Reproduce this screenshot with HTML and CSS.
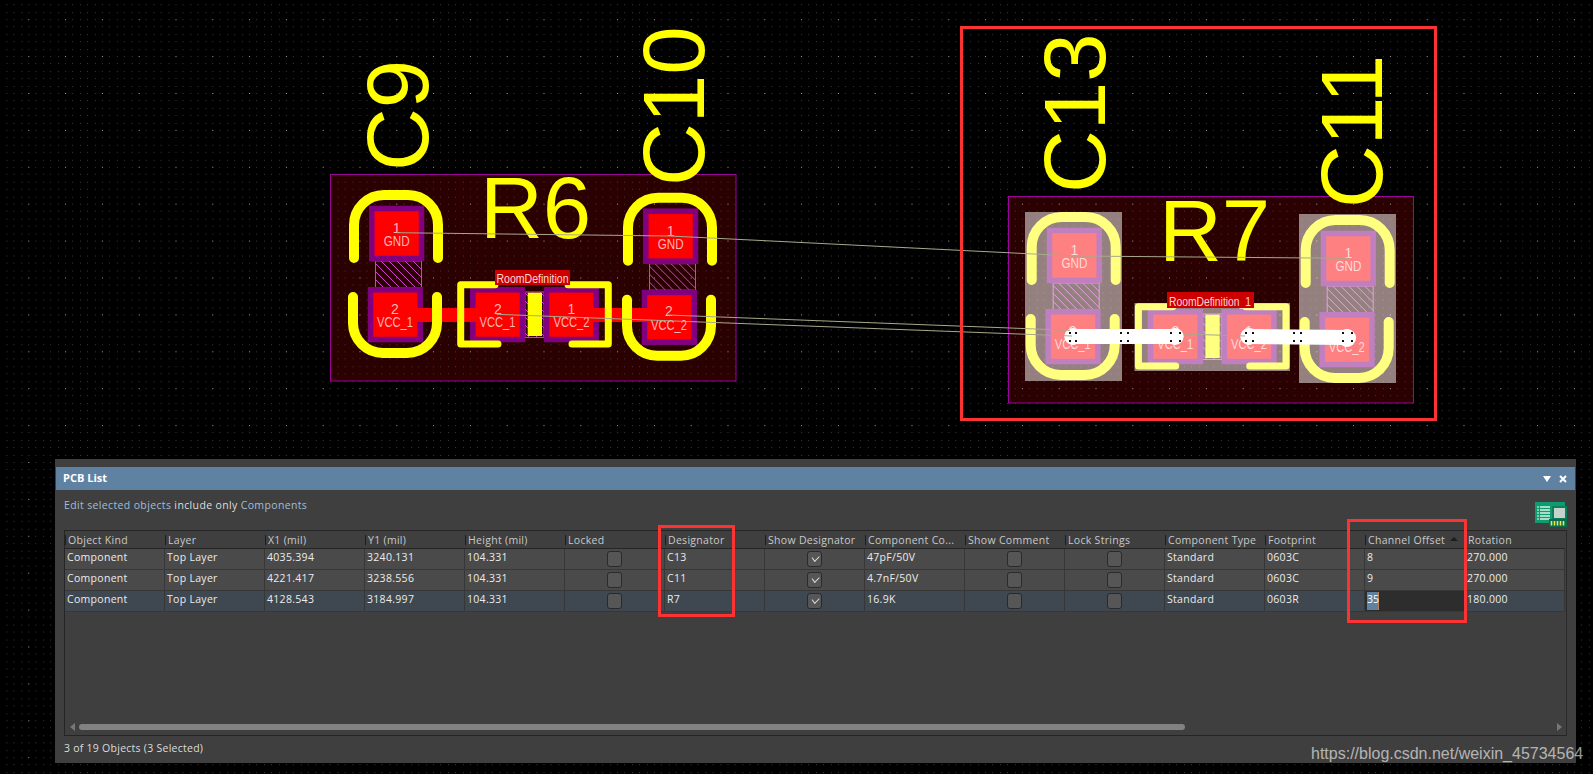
FILE: index.html
```html
<!DOCTYPE html>
<html lang="en">
<head>
<meta charset="utf-8">
<title>PCB List</title>
<link rel="stylesheet" href="styles.css">
</head>
<body>
<div class="stage">
  <svg class="canvas" width="1593" height="774" viewBox="0 0 1593 774">
    <defs>
      <pattern id="grid" width="36.8" height="36.9" patternUnits="userSpaceOnUse" patternTransform="translate(28.3 19.2)">
        <g class="dot-minor">
          <rect x="7.36" y="0" width="1" height="1"/><rect x="14.72" y="0" width="1" height="1"/><rect x="22.08" y="0" width="1" height="1"/><rect x="29.44" y="0" width="1" height="1"/>
          <rect x="0" y="7.38" width="1" height="1"/><rect x="7.36" y="7.38" width="1" height="1"/><rect x="14.72" y="7.38" width="1" height="1"/><rect x="22.08" y="7.38" width="1" height="1"/><rect x="29.44" y="7.38" width="1" height="1"/>
          <rect x="0" y="14.76" width="1" height="1"/><rect x="7.36" y="14.76" width="1" height="1"/><rect x="14.72" y="14.76" width="1" height="1"/><rect x="22.08" y="14.76" width="1" height="1"/><rect x="29.44" y="14.76" width="1" height="1"/>
          <rect x="0" y="22.14" width="1" height="1"/><rect x="7.36" y="22.14" width="1" height="1"/><rect x="14.72" y="22.14" width="1" height="1"/><rect x="22.08" y="22.14" width="1" height="1"/><rect x="29.44" y="22.14" width="1" height="1"/>
          <rect x="0" y="29.52" width="1" height="1"/><rect x="7.36" y="29.52" width="1" height="1"/><rect x="14.72" y="29.52" width="1" height="1"/><rect x="22.08" y="29.52" width="1" height="1"/><rect x="29.44" y="29.52" width="1" height="1"/>
        </g>
        <rect class="dot-major" x="0" y="0" width="1" height="1"/>
      </pattern>
      <pattern id="hatch" width="8" height="8" patternUnits="userSpaceOnUse">
        <path class="hatch-line" d="M-2 -2L10 10M-10 -2L2 10M6 -2L18 10"/>
      </pattern>
      <g id="cap-pads">
        <rect class="hatch" x="375.5" y="261" width="46" height="26.5"/>
        <rect class="pad" x="371.8" y="208.5" width="49.7" height="50"/>
        <rect class="pad" x="370.5" y="289.8" width="49.7" height="49.7"/>
      </g>
      <g id="cap-silk">
        <path class="silk" d="M354 258V225A30 30 0 0 1 384 195H408A30 30 0 0 1 438 225V258"/>
        <path class="silk" d="M353 297V323A30 30 0 0 0 383 353H407A30 30 0 0 0 437 323V297"/>
      </g>
      <g id="res-pads">
        <rect class="hatch" x="525" y="292" width="19" height="45.5"/>
        <rect class="pad" x="472.8" y="289.8" width="49.7" height="49.7"/>
        <rect class="pad" x="546.5" y="289.8" width="49.7" height="49.7"/>
      </g>
      <g id="res-silk">
        <rect class="bar" x="527.7" y="292.7" width="14.3" height="43.3"/>
        <path class="silk-square" d="M498 344H460.7V284.7H495"/>
        <path class="silk-square" d="M572 344H608.3V284.7H568"/>
      </g>
    </defs>

    <rect class="room" x="330.5" y="174.5" width="405.5" height="206.5"/>
    <rect class="room" x="1008.5" y="196.5" width="405" height="206.5"/>
    <rect fill="url(#grid)" width="1593" height="774"/>

    <!-- left channel -->
    <use href="#cap-pads"/>
    <use href="#cap-pads" transform="translate(274 2.7)"/>
    <use href="#res-pads"/>
    <path class="track" d="M417 315H476M593 315H650"/>
    <use href="#cap-silk"/>
    <use href="#cap-silk" transform="translate(274 2.7)"/>
    <use href="#res-silk"/>
    <text class="pin" x="396.7" y="233">1</text>
    <text class="pin" x="396.7" y="246" textLength="26" lengthAdjust="spacingAndGlyphs">GND</text>
    <text class="pin" x="395" y="313.500">2</text>
    <text class="pin" x="395" y="327" textLength="36" lengthAdjust="spacingAndGlyphs">VCC_1</text>
    <text class="pin" x="670.7" y="235.700">1</text>
    <text class="pin" x="670.7" y="248.7" textLength="26" lengthAdjust="spacingAndGlyphs">GND</text>
    <text class="pin" x="669" y="316.2">2</text>
    <text class="pin" x="669" y="329.7" textLength="36" lengthAdjust="spacingAndGlyphs">VCC_2</text>
    <text class="pin" x="498" y="313.500">2</text>
    <text class="pin" x="497.5" y="327" textLength="36" lengthAdjust="spacingAndGlyphs">VCC_1</text>
    <text class="pin" x="571.5" y="313.500">1</text>
    <text class="pin" x="571.5" y="327" textLength="36" lengthAdjust="spacingAndGlyphs">VCC_2</text>
    <rect class="room-tag" x="495" y="270" width="75" height="15"/>
    <text class="room-name" x="532.5" y="283" textLength="72" lengthAdjust="spacingAndGlyphs">RoomDefinition</text>

    <!-- right channel, selected -->
    <g transform="translate(677.7 22)"><use href="#cap-pads"/><use href="#cap-silk"/></g>
    <g transform="translate(951.7 25)"><use href="#cap-pads"/><use href="#cap-silk"/></g>
    <g transform="translate(677.7 22)"><use href="#res-pads"/><use href="#res-silk"/></g>
    <text class="pin" x="1074.4" y="255">1</text>
    <text class="pin" x="1074.4" y="268" textLength="26" lengthAdjust="spacingAndGlyphs">GND</text>
    <text class="pin" x="1072.7" y="335.500">2</text>
    <text class="pin" x="1072.7" y="349" textLength="36" lengthAdjust="spacingAndGlyphs">VCC_1</text>
    <text class="pin" x="1348.4" y="258">1</text>
    <text class="pin" x="1348.4" y="271" textLength="26" lengthAdjust="spacingAndGlyphs">GND</text>
    <text class="pin" x="1346.7" y="338.500">2</text>
    <text class="pin" x="1346.7" y="352" textLength="36" lengthAdjust="spacingAndGlyphs">VCC_2</text>
    <text class="pin" x="1175.5" y="335.500">2</text>
    <text class="pin" x="1175.2" y="349" textLength="36" lengthAdjust="spacingAndGlyphs">VCC_1</text>
    <text class="pin" x="1249" y="335.500">1</text>
    <text class="pin" x="1249" y="349" textLength="36" lengthAdjust="spacingAndGlyphs">VCC_2</text>
    <rect class="veil" x="1025" y="212" width="97" height="169"/>
    <rect class="veil" x="1299" y="214" width="97" height="169"/>
    <rect class="veil" x="1134.5" y="303" width="155.5" height="68"/>
    <path class="track-selected" d="M1072 336.500H1176M1248 336.500L1348 337.500"/>
    <circle class="via-end" cx="1347" cy="338" r="9"/>
    <circle class="via-end" cx="1073" cy="336.500" r="8.500"/>
    <circle class="via-end" cx="1175" cy="336.500" r="8.500"/>
    <circle class="via-end" cx="1249" cy="336.500" r="8.500"/>
    <g class="via-dots">
      <rect x="1069" y="332" width="2" height="2"/><rect x="1075" y="332" width="2" height="2"/><rect x="1069" y="340" width="2" height="2"/><rect x="1075" y="340" width="2" height="2"/>
      <rect x="1120" y="332" width="2" height="2"/><rect x="1127" y="332" width="2" height="2"/><rect x="1120" y="340" width="2" height="2"/><rect x="1127" y="340" width="2" height="2"/>
      <rect x="1170" y="332" width="2" height="2"/><rect x="1179" y="332" width="2" height="2"/><rect x="1170" y="340" width="2" height="2"/><rect x="1179" y="340" width="2" height="2"/>
      <rect x="1245" y="332" width="2" height="2"/><rect x="1252" y="332" width="2" height="2"/><rect x="1245" y="340" width="2" height="2"/><rect x="1252" y="340" width="2" height="2"/>
      <rect x="1293" y="332" width="2" height="2"/><rect x="1300" y="332" width="2" height="2"/><rect x="1293" y="340" width="2" height="2"/><rect x="1300" y="340" width="2" height="2"/>
      <rect x="1342" y="332" width="2" height="2"/><rect x="1351" y="332" width="2" height="2"/><rect x="1342" y="340" width="2" height="2"/><rect x="1351" y="340" width="2" height="2"/>
    </g>
    <rect class="room-tag" x="1167" y="292" width="87" height="16"/>
    <text class="room-name" x="1210" y="306" textLength="82" lengthAdjust="spacingAndGlyphs">RoomDefinition_1</text>

    <!-- designators -->
    <text class="designator" x="480" y="238">R6</text>
    <text class="designator" x="1159" y="260.7">R7</text>
    <text class="designator" transform="translate(428 171) rotate(-90)">C9</text>
    <text class="designator" transform="translate(704 186) rotate(-90)">C10</text>
    <text class="designator" transform="translate(1104.500 193) rotate(-90)">C13</text>
    <text class="designator" transform="translate(1381.500 208) rotate(-90)">C11</text>

    <!-- connection lines -->
    <path class="ratsnest" d="M396.7 232.7L670 236L1074 256L1348.7 258.3"/>
    <path class="ratsnest" d="M668 315L1070 330.3"/>
    <path class="ratsnest" d="M496.7 314.3L1072 336"/>
    <path class="ratsnest" d="M1184 334L1245 336"/>

    <rect class="note-box" x="961.5" y="27.5" width="474" height="392"/>
  </svg>

  <section class="panel">
    <header class="titlebar">
      <span class="title">PCB List</span>
      <span class="title-tools">
        <svg class="tool" width="8" height="6" viewBox="0 0 8 6"><path class="tool-fill" d="M0 0H8L4 6Z"/></svg>
        <svg class="tool" width="8" height="8" viewBox="0 0 8 8"><path class="tool-stroke" d="M1 1L7 7M7 1L1 7"/></svg>
      </span>
    </header>
    <div class="filterbar">
      <p class="filter"><span class="link">Edit selected objects</span> include only <span class="link">Components</span></p>
      <svg class="pcb-icon" width="32" height="25" viewBox="0 0 32 25">
        <rect class="ic-board" x="0" y="0" width="30" height="21"/>
        <path class="ic-lines" d="M5 5H15M5 8H15M5 11H15M5 14H15M5 17H15"/>
        <path class="ic-bullets" d="M2 5H4M2 8H4M2 11H4M2 14H4M2 17H4"/>
        <rect class="ic-frame" x="17" y="4" width="15" height="14"/>
        <rect class="ic-chip" x="19" y="6" width="11" height="10"/>
        <rect class="ic-foot" x="14" y="17" width="18" height="8"/>
        <path class="ic-pins" d="M16.5 19V23.500M19.500 19V23.500M22.500 19V23.500M25.500 19V23.500M28.500 19V23.500"/>
      </svg>
    </div>
    <div class="gridbox">
      <table class="list">
        <thead>
          <tr>
            <th>Object Kind</th><th>Layer</th><th>X1 (mil)</th><th>Y1 (mil)</th><th>Height (mil)</th><th>Locked</th><th>Designator</th><th>Show Designator</th><th>Component Co...</th><th>Show Comment</th><th>Lock Strings</th><th>Component Type</th><th>Footprint</th><th class="sorted">Channel Offset</th><th>Rotation</th>
          </tr>
        </thead>
        <tbody>
          <tr>
            <td>Component</td><td>Top Layer</td><td>4035.394</td><td>3240.131</td><td>104.331</td><td class="c"><span class="check"></span></td><td>C13</td><td class="c"><span class="check on"></span></td><td>47pF/50V</td><td class="c"><span class="check"></span></td><td class="c"><span class="check"></span></td><td>Standard</td><td>0603C</td><td>8</td><td>270.000</td>
          </tr>
          <tr>
            <td>Component</td><td>Top Layer</td><td>4221.417</td><td>3238.556</td><td>104.331</td><td class="c"><span class="check"></span></td><td>C11</td><td class="c"><span class="check on"></span></td><td>4.7nF/50V</td><td class="c"><span class="check"></span></td><td class="c"><span class="check"></span></td><td>Standard</td><td>0603C</td><td>9</td><td>270.000</td>
          </tr>
          <tr class="current">
            <td>Component</td><td>Top Layer</td><td>4128.543</td><td>3184.997</td><td>104.331</td><td class="c"><span class="check"></span></td><td>R7</td><td class="c"><span class="check on"></span></td><td>16.9K</td><td class="c"><span class="check"></span></td><td class="c"><span class="check"></span></td><td>Standard</td><td>0603R</td><td class="editing"><span class="sel">35</span></td><td>180.000</td>
          </tr>
        </tbody>
      </table>
      <div class="scrollbar">
        <span class="arrow left"></span>
        <span class="thumb"></span>
        <span class="arrow right"></span>
      </div>
    </div>
    <footer class="status">3 of 19 Objects (3 Selected)</footer>
    <div class="mark mark-designator"></div>
    <div class="mark mark-channel"></div>
  </section>
  <div class="watermark">https://blog.csdn.net/weixin_45734564</div>
</div>
</body>
</html>
```
FILE: styles.css
```css
* { box-sizing: border-box; }
html, body { margin: 0; padding: 0; background: #000; }
body { width: 1593px; height: 774px; overflow: hidden; }
.stage { position: relative; width: 1593px; height: 774px; overflow: hidden; background: #000; }
.canvas { position: absolute; left: 0; top: 0; display: block; }

.dot-minor rect { fill: #3a3a3a; shape-rendering: crispEdges; }
.dot-major { fill: #a8a8a8; shape-rendering: crispEdges; }
.room { fill: #2b0000; stroke: #a000a0; stroke-width: 1; }
.hatch { fill: url(#hatch); stroke: #d23cd2; stroke-width: 1; }
.hatch-line { stroke: #d23cd2; stroke-width: 1; fill: none; }
.pad { fill: #ff0000; stroke: #800080; stroke-width: 5.5; }
.bar { fill: #ffff00; }
.silk { fill: none; stroke: #ffff00; stroke-width: 10; stroke-linecap: round; }
.silk-square { fill: none; stroke: #ffff00; stroke-width: 7; stroke-linecap: round; stroke-linejoin: round; }
.track { fill: none; stroke: #ff0000; stroke-width: 14; }
.track-selected { fill: none; stroke: #fff; stroke-width: 15; stroke-linecap: round; }
.via-end { fill: #fff; }
.via-dots rect { fill: #111; }
.veil { fill: rgba(255, 255, 255, .5); }
.pin { font: 14px "Liberation Sans", Arial, sans-serif; fill: #ffb4b4; text-anchor: middle; }
.room-tag { fill: #cc0000; }
.room-name { font: 12px "Liberation Sans", Arial, sans-serif; fill: #ffd6d6; text-anchor: middle; }
.designator { font: 87px "Liberation Sans", Arial, sans-serif; fill: #ffff00; }
.ratsnest { fill: none; stroke: #a8a88c; stroke-width: 1; }
.note-box { fill: none; stroke: #fb3333; stroke-width: 3; }

.panel {
  position: absolute; left: 55px; top: 459px; width: 1521px; height: 304px;
  display: flex; flex-direction: column; padding: 8px 1px 0;
  background: #3f3f3f; color: #e2e2e2;
  font: 10.5px "Open Sans", "Noto Sans", sans-serif;
}
.titlebar {
  flex: none; height: 23px; display: flex; align-items: center; justify-content: space-between;
  padding: 0 8px 2px 7px; background: #5f82a3; color: #fff;
}
.title { font-weight: 700; font-size: 11px; letter-spacing: 0; }
.title-tools { display: flex; align-items: center; gap: 8px; padding-top: 2px; }
.tool { display: block; }
.tool-fill { fill: #fff; }
.tool-stroke { stroke: #fff; stroke-width: 2; fill: none; }

.filterbar { flex: none; height: 40px; display: flex; justify-content: space-between; align-items: flex-start; padding: 0 8px 0 8px; }
.filter { margin: 8px 0 0; letter-spacing: .36px; line-height: 14px; color: #dedede; }
.link { color: #a0bed6; }
.pcb-icon { margin-top: 12px; display: block; }
.ic-board { fill: #0f9a70; }
.ic-lines { stroke: #d8f3e4; stroke-width: 1.4; fill: none; }
.ic-bullets { stroke: #9fe0c4; stroke-width: 1.4; fill: none; }
.ic-frame { fill: #0b7f5c; }
.ic-chip { fill: #c6d2cc; }
.ic-foot { fill: #0a6a4c; }
.ic-pins { stroke: #e9e65a; stroke-width: 1.6; fill: none; }

.gridbox {
  flex: none; width: 1503px; height: 206px; margin-left: 8px;
  border: 1px solid #252525; border-right-color: #2a2a2a;
  display: flex; flex-direction: column; justify-content: space-between;
}
.list { width: 1500px; table-layout: fixed; border-collapse: separate; border-spacing: 0; }
.list th, .list td { width: 100px; overflow: hidden; white-space: nowrap; text-align: left; }
.list th {
  height: 18px; padding: 1px 0 0 3px; font-weight: 400; color: #c9c9c9; letter-spacing: .3px;
  border-bottom: 1px solid #252525;
  background: linear-gradient(#1e1e1e, #1e1e1e) left 4px / 1px 10px no-repeat;
}
.list td {
  height: 21px; padding: 0 0 5px 2px; background: #4a4a4a; color: #ececec; letter-spacing: .3px;
  border-right: 1px solid #373737; border-bottom: 1px solid #373737;
}
.list td.c { padding: 0; text-align: center; vertical-align: middle; }
.list tr.current td { background: #3f4750; }
.list tr.current td.editing { background: #2d2d2d; padding: 1px 0 1px 2px; vertical-align: top; }
.sel { display: block; width: 12px; height: 18px; line-height: 15px; background: #5f82a3; color: #fff; border-right: 1px solid #c08050; letter-spacing: 0; }
.list th.sorted { position: relative; }
.list th.sorted::after {
  content: ""; position: absolute; right: 7px; top: 6px;
  border-left: 4px solid transparent; border-right: 4px solid transparent; border-bottom: 4px solid #1c1c1c;
}
.check {
  display: inline-block; position: relative; width: 15px; height: 16px; vertical-align: middle;
  background: #565656; border: 1px solid #2a2a2a; border-radius: 3px;
}
.check.on::after {
  content: ""; position: absolute; left: 4px; top: 3px; width: 6px; height: 3.5px;
  border-left: 1px solid #ddd; border-bottom: 1px solid #ddd; transform: rotate(-45deg) skewX(-8deg);
}
.scrollbar { flex: none; height: 14px; display: flex; align-items: center; padding: 0 4px 3px 5px; }
.thumb { width: 1106px; height: 6px; margin-left: 4px; background: #828282; border-radius: 3px; }
.arrow { width: 0; height: 0; border-top: 4px solid transparent; border-bottom: 4px solid transparent; }
.arrow.left { border-right: 5px solid #777; margin-left: 0; }
.arrow.right { border-left: 5px solid #777; margin-left: auto; }
.status { flex: none; padding: 5px 0 0 8px; letter-spacing: .26px; color: #dcdcdc; line-height: 14px; }

.mark { position: absolute; border: 3px solid #fb3333; }
.mark-designator { left: 603px; top: 66px; width: 77px; height: 92px; }
.mark-channel { left: 1292px; top: 60px; width: 120px; height: 104px; }

.watermark {
  position: absolute; left: 1311px; top: 745px;
  font: 16px "Liberation Sans", Arial, sans-serif; color: rgba(255, 255, 255, .62); white-space: nowrap;
}
```
